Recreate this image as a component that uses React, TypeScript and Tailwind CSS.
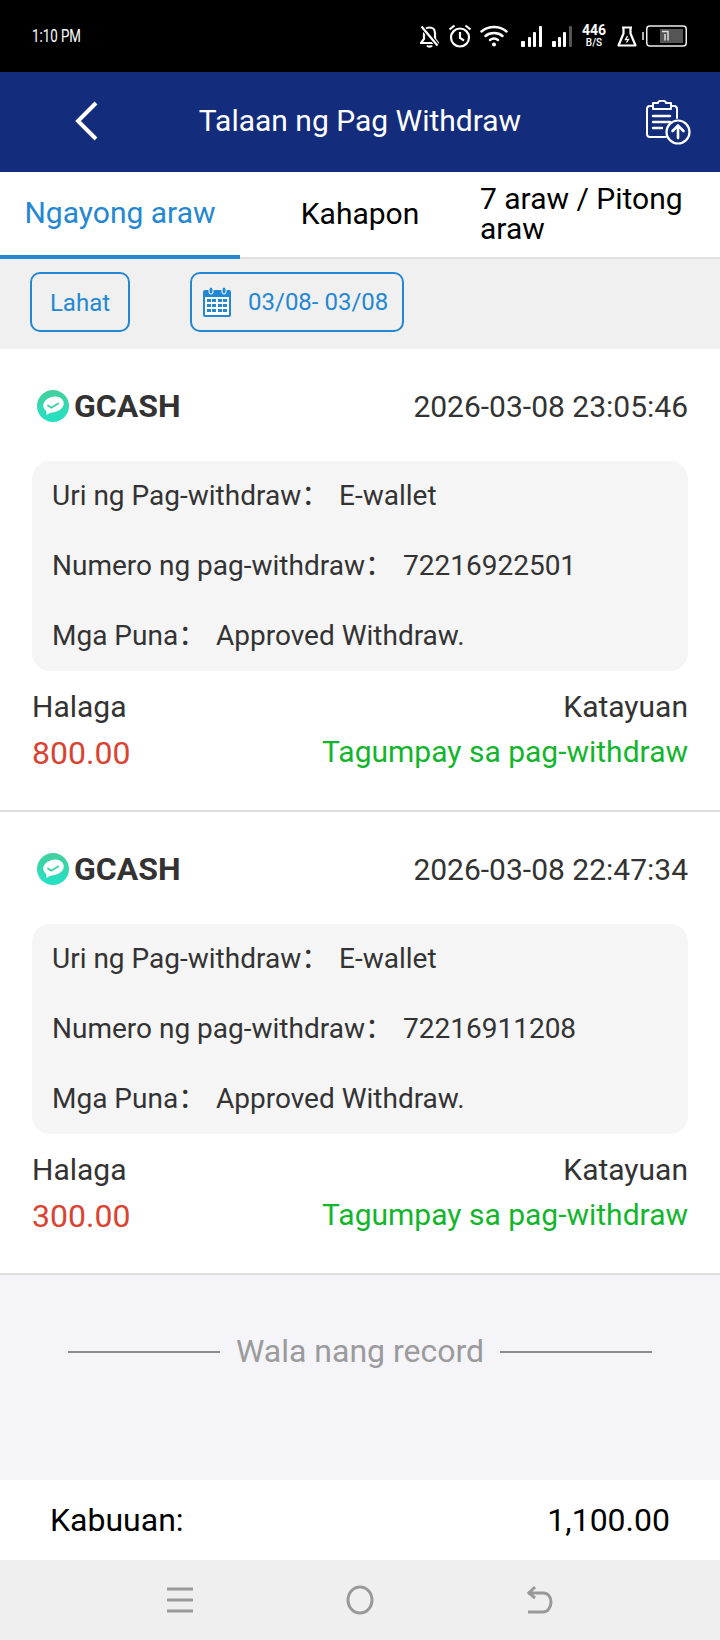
import React from 'react';

const records = [
  { time: '2026-03-08 23:05:46', no: '72216922501', amount: '800.00' },
  { time: '2026-03-08 22:47:34', no: '72216911208', amount: '300.00' },
];

function GcashLogo() {
  return (
    <svg width="32" height="32" viewBox="0 0 32 32" className="shrink-0">
      <defs>
        <linearGradient id="gc" x1="0" y1="0" x2="0" y2="1">
          <stop offset="0" stopColor="#45cf9c" />
          <stop offset="1" stopColor="#22e2c6" />
        </linearGradient>
      </defs>
      <circle cx="16" cy="16" r="16" fill="url(#gc)" />
      <ellipse cx="16.500" cy="14.500" rx="10.500" ry="7.800" fill="#fff" transform="rotate(-14 16.500 14.500)" />
      <path d="M9 18l.5 7 6-3.500z" fill="#fff" />
      <path d="M11 15.500l3.200 2.200 7-4.200" fill="none" stroke="#36d3a8" strokeWidth="1.800" strokeLinecap="round" strokeLinejoin="round" />
    </svg>
  );
}

function StatusIcons() {
  return (
    <div className="flex items-center text-white">
      <svg width="19" height="23" viewBox="0 0 19 23" fill="none" stroke="#fff" strokeWidth="2.200" className="mr-[9px]">
        <path d="M9.500 2.500C6 2.500 4 5 4 8v6l-3 4h17l-3-4V8c0-3-2-5.500-5.500-5.500z" />
        <path d="M7 20.500c1 1.500 4 1.500 5 0" />
        <path d="M1 1l17 20" stroke="#000" strokeWidth="4.500" />
        <path d="M1.500 1.500l16 19" />
      </svg>
      <svg width="24" height="24" viewBox="0 0 24 24" fill="none" stroke="#fff" strokeWidth="2.200" className="mr-[8px]">
        <circle cx="12" cy="13.500" r="9" />
        <path d="M12 8v6l4 2.500M1.500 5.500l5-4M22.500 5.500l-5-4" />
      </svg>
      <svg width="28" height="22" viewBox="0 0 28 22" fill="none" stroke="#fff" strokeWidth="2.400" strokeLinecap="round" className="mr-[13px]">
        <path d="M1.500 6.500c7-6 18-6 25 0M5.500 11c4.500-4 12.500-4 17 0M10 15c2.500-2 5.500-2 8 0" />
        <circle cx="14" cy="19.500" r="2" fill="#fff" stroke="none" />
      </svg>
      <svg width="21" height="21" viewBox="0 0 21 21" fill="#fff" className="mr-[10px]">
        <rect x="0" y="15" width="4" height="6" rx="1" />
        <rect x="7" y="11" width="3" height="10" rx="1" />
        <rect x="12" y="6" width="3" height="15" rx="1" />
        <rect x="18" y="0" width="3" height="21" rx="1" />
      </svg>
      <svg width="20" height="21" viewBox="0 0 20 21" fill="#fff" className="mr-[10px]">
        <rect x="0" y="15" width="4" height="6" rx="1" />
        <rect x="6" y="11" width="3" height="10" rx="1" />
        <rect x="11" y="6" width="3" height="15" rx="1" />
        <rect x="17" y="0" width="3" height="21" rx="1" fill="#555" />
      </svg>
      <div className="w-[24px] flex flex-col items-center mr-[11px] font-bold text-white">
        <span className="text-[14px] leading-[13px]">446</span>
        <span className="text-[10px] leading-[10px] font-medium mt-[1px]">B/S</span>
      </div>
      <svg width="20" height="21" viewBox="0 0 20 21" fill="none" stroke="#fff" strokeWidth="2.200" className="mr-[5px]">
        <path d="M5 1.500h10M6.500 1.500v6L1.500 19.500h17L13.500 7.500v-6" strokeLinejoin="round" />
        <path d="M10.500 10l-2 3.500h3l-2 3" strokeWidth="1.300" />
      </svg>
      <svg width="45" height="22" viewBox="0 0 45 22">
        <rect x="0" y="7" width="2" height="8" fill="#fff" opacity="0.7" />
        <rect x="4.750" y="1" width="39.500" height="20" rx="3" fill="none" stroke="#eee" strokeWidth="1.500" />
        <rect x="18" y="4" width="23" height="14" fill="#555" />
        <path d="M20 6.500h6v9M23 9v6.500" fill="none" stroke="#ddd" strokeWidth="1.500" />
      </svg>
    </div>
  );
}

function RecordCard({ time, no, amount }: { time: string; no: string; amount: string }) {
  return (
    <div className="bg-white border-b-2 border-[#dedede] h-[463px] px-[32px] pt-[26px] shrink-0">
      <div className="flex items-center justify-between h-[62px]">
        <div className="flex items-center pl-[5px] gap-[5px]">
          <GcashLogo />
          <span className="text-[32px] font-bold text-[#333]">GCASH</span>
        </div>
        <span className="text-[30px] text-[#333]">{time}</span>
      </div>
      <div className="mt-[24px] h-[210px] bg-[#f5f5f6] rounded-[18px] pl-[20px] text-[28px] text-[#333] font-['Roboto','Noto_Sans_CJK_SC',sans-serif]">
        <div className="h-[70px] pb-[1px] flex items-center">
          <span className="w-[287px]">Uri ng Pag-withdraw：</span>
          <span>E-wallet</span>
        </div>
        <div className="h-[70px] pb-[1px] flex items-center">
          <span className="w-[351px]">Numero ng pag-withdraw：</span>
          <span>{no}</span>
        </div>
        <div className="h-[70px] pb-[1px] flex items-center">
          <span className="w-[164px]">Mga Puna：</span>
          <span>Approved Withdraw.</span>
        </div>
      </div>
      <div className="flex justify-between mt-[13px] text-[30px] text-[#333] h-[44px] items-center">
        <span>Halaga</span>
        <span>Katayuan</span>
      </div>
      <div className="flex justify-between mt-[1px] h-[48px] items-center">
        <span className="text-[32px] text-[#db4230]">{amount}</span>
        <span className="text-[30px] text-[#12b52c] mb-[3px]">Tagumpay sa pag-withdraw</span>
      </div>
    </div>
  );
}

export default function App() {
  return (
    <div className="w-[720px] h-[1640px] flex flex-col font-['Roboto',sans-serif] bg-[#f4f4f9] overflow-hidden">
      <div className="h-[72px] bg-black flex items-center justify-between pl-[32px] pr-[33px] shrink-0">
        <span className="text-white text-[19px] scale-x-[0.7] origin-left">1:10 PM</span>
        <StatusIcons />
      </div>

      <div className="h-[100px] bg-[#142c7c] relative flex items-center justify-center pb-[3px] shrink-0">
        <svg width="26" height="40" viewBox="0 0 26 40" fill="none" stroke="#fff" strokeWidth="4" className="absolute left-[73px] top-[29px]">
          <path d="M23 2L5 20l18 18" />
        </svg>
        <span className="text-white text-[30px]">Talaan ng Pag Withdraw</span>
        <svg width="46" height="46" viewBox="0 0 46 46" fill="none" stroke="#fff" strokeWidth="2" strokeLinecap="round" className="absolute left-[645px] top-[28px]">
          <path d="M8 6H5C3 6 2 7 2 9v25c0 2 1 3 3 3h16M26 6h3c2 0 3 1 3 3v9" />
          <path d="M8 3h5c0-3 8-3 8 0h5v6H8z" strokeLinejoin="round" />
          <path d="M8 16h17M8 22h17M8 28h9" strokeWidth="2.400" />
          <circle cx="33" cy="32" r="11.500" strokeWidth="2.200" />
          <path d="M33 38V26M27.500 31l5.500-5.500 5.500 5.500" strokeWidth="2.600" />
        </svg>
      </div>

      <div className="h-[87px] bg-white flex border-b-[2px] border-[#e0e0e0] shrink-0">
        <div className="w-[240px] h-[87px] flex items-center justify-center border-b-[4px] border-[#2487d2] text-[#2487d2] text-[30px] pb-[2px]">
          Ngayong araw
        </div>
        <div className="w-[240px] flex items-center justify-center text-[30px] text-black pb-[2px]">
          Kahapon
        </div>
        <div className="w-[240px] flex items-center text-[30px] leading-[30px] text-black pb-[2px]">
          7 araw / Pitong araw
        </div>
      </div>

      <div className="h-[90px] bg-[#f0f0f1] flex items-center pl-[30px] pb-[5px] shrink-0">
        <div className="w-[100px] h-[60px] border-2 border-[#2487d2] rounded-[10px] flex items-center justify-center pt-[3px] text-[24px] text-[#2487d2] mr-[60px]">
          Lahat
        </div>
        <div className="w-[214px] h-[60px] border-2 border-[#2487d2] rounded-[10px] flex items-center pl-[11px] text-[24px] text-[#2487d2]">
          <svg width="28" height="30" viewBox="0 0 28 30" className="mr-[17px] shrink-0">
            <rect x="0" y="3" width="28" height="27" rx="2" fill="#2487d2" />
            <rect x="2" y="10" width="24" height="18" fill="#fff" />
            <rect x="6" y="0" width="4" height="7" rx="2" fill="#2487d2" stroke="#fff" />
            <rect x="19" y="0" width="4" height="7" rx="2" fill="#2487d2" stroke="#fff" />
            <g fill="#2487d2">
              <rect x="4" y="12" width="4" height="3" /><rect x="9" y="12" width="4" height="3" /><rect x="15" y="12" width="4" height="3" /><rect x="20" y="12" width="4" height="3" />
              <rect x="4" y="17" width="4" height="3" /><rect x="9" y="17" width="4" height="3" /><rect x="15" y="17" width="4" height="3" /><rect x="20" y="17" width="4" height="3" />
              <rect x="4" y="22" width="4" height="3" /><rect x="9" y="22" width="4" height="3" /><rect x="15" y="22" width="4" height="3" /><rect x="20" y="22" width="4" height="3" />
            </g>
          </svg>
          <span>03/08- 03/08</span>
        </div>
      </div>

      {records.map((r) => (
        <RecordCard key={r.no} {...r} />
      ))}

      <div className="flex-1 min-h-0 flex items-start justify-center pt-[56px] px-[68px] gap-[16px]">
        <div className="flex-1 h-[2px] bg-[#8c8c8c] mt-[20px]" />
        <span className="text-[32px] leading-[40px] text-[#9b9b9b]">Wala nang record</span>
        <div className="flex-1 h-[2px] bg-[#8c8c8c] mt-[20px]" />
      </div>

      <div className="h-[80px] bg-white flex items-center justify-between px-[50px] text-[32px] text-black shrink-0">
        <span>Kabuuan:</span>
        <span>1,100.00</span>
      </div>

      <div className="h-[80px] bg-[#efefef] shrink-0 relative">
        <svg width="26" height="28" viewBox="0 0 26 28" fill="none" stroke="#999" strokeWidth="3" className="absolute left-[167px] top-[26px]">
          <path d="M0 3h26M0 14h26M0 25h26" />
        </svg>
        <svg width="28" height="30" viewBox="0 0 28 30" fill="none" stroke="#999" strokeWidth="3" className="absolute left-[346px] top-[25px]">
          <ellipse cx="14" cy="15" rx="12" ry="13" />
        </svg>
        <svg width="28" height="30" viewBox="0 0 28 30" fill="none" stroke="#999" strokeWidth="3" className="absolute left-[526px] top-[25px]">
          <path d="M2 8h15c5 0 8 4 8 9s-3 10-8 10H2" />
          <path d="M9 2L3 8l6 5" />
        </svg>
      </div>
    </div>
  );
}
